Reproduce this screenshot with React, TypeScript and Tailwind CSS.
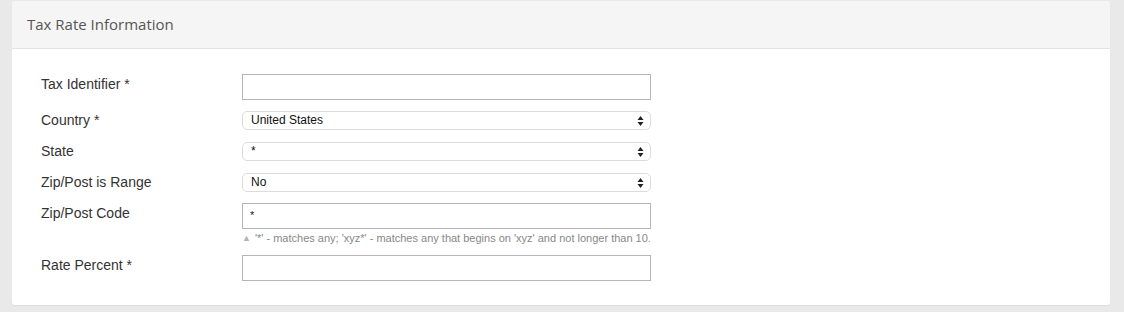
import React from "react";

const Arrows = () => (
  <svg width="7" height="11" viewBox="0 0 7 11" className="absolute right-[6px] top-1/2 -translate-y-1/2">
    <path d="M3.5 0.5 L6.5 4.5 L0.5 4.5 Z" fill="#222" />
    <path d="M3.5 10.5 L6.5 6.5 L0.5 6.5 Z" fill="#222" />
  </svg>
);

const TextRow = ({ label, value, mt, children }: { label: string; value?: string; mt: string; children?: React.ReactNode }) => (
  <div className={`flex items-start ${mt}`}>
    <div className="w-[201px] pt-[2px] text-[14px] leading-[17px] text-[#333]">{label}</div>
    <div>
      <div className="w-[409px] h-[26px] border border-[#b5b5b5] bg-white px-[7px] text-[11px] leading-[22px] text-[#222]">
        {value}
      </div>
      {children}
    </div>
  </div>
);

const SelectRow = ({ label, value, mt }: { label: string; value: string; mt: string }) => (
  <div className={`flex items-center ${mt}`}>
    <div className="w-[201px] text-[14px] leading-[17px] text-[#333]">{label}</div>
    <div className="relative w-[409px] h-[19px] rounded-[5px] border border-[#dcdcdc] bg-white pl-[8px] text-[12px] leading-[17px] text-[#111]">
      {value}
      <Arrows />
    </div>
  </div>
);

export default function App() {
  return (
    <div className="min-h-screen w-[1124px] bg-[#e9e9e9] pt-px pl-[12px]" style={{ fontFamily: '"Liberation Sans", Arial, sans-serif' }}>
      <div className="w-[1098px] h-[304px] rounded-[3px] bg-white shadow-[0_1px_1px_rgba(0,0,0,0.06)] overflow-hidden">
        <div className="h-[48px] border-b border-[#e3e3e3] bg-[#f5f5f5] pl-[15px] flex items-center">
          <span className="text-[15px] font-normal text-[#555]" style={{ fontFamily: '"Open Sans", sans-serif' }}>
            Tax Rate Information
          </span>
        </div>
        <div className="pl-[29px] pt-[25px]">
          <TextRow label="Tax Identifier *" mt="mt-0" />
          <SelectRow label="Country *" value="United States" mt="mt-[11px]" />
          <SelectRow label="State" value="*" mt="mt-[12px]" />
          <SelectRow label="Zip/Post is Range" value="No" mt="mt-[12px]" />
          <TextRow label="Zip/Post Code" value="*" mt="mt-[11px]">
            <div className="mt-[2px] flex items-center gap-[4px] text-[11px] leading-[14px] text-[#888]">
              <span className="text-[9px] text-[#a9b3b8]">▲</span>
              <span>'*' - matches any; 'xyz*' - matches any that begins on 'xyz' and not longer than 10.</span>
            </div>
          </TextRow>
          <TextRow label="Rate Percent *" mt="mt-[10px]" />
        </div>
      </div>
    </div>
  );
}
